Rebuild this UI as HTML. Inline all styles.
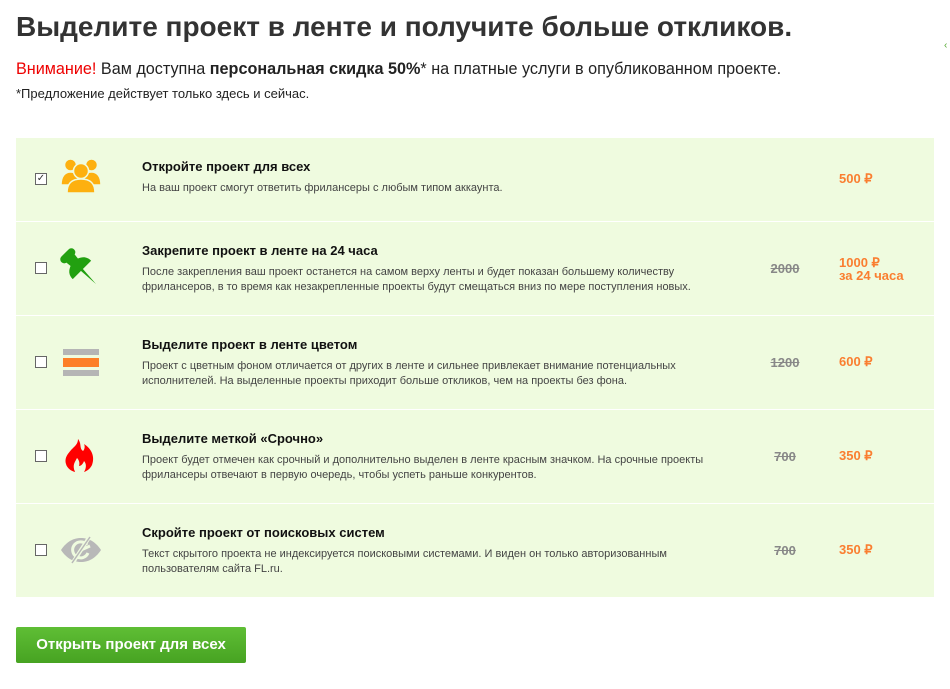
<!DOCTYPE html>
<html><head><meta charset="utf-8"><style>
body{margin:0;width:950px;height:689px;background:#fff;font-family:"Liberation Sans",Arial,sans-serif;position:relative;overflow:hidden}
h1{position:absolute;left:16px;top:11px;margin:0;font-size:28px;font-weight:bold;color:#333;letter-spacing:0}
.n{position:absolute;left:16px;top:60px;font-size:16.2px;color:#222}
.n b{font-weight:bold}
.s{position:absolute;left:16px;top:86px;font-size:13px;color:#222}
.panel{position:absolute;left:16px;top:138px;width:918px;height:459px;background:#effbdf}
.row{position:absolute;left:0;width:918px;border-top:1px solid #fff}
.cb{position:absolute;left:19px;width:12px;height:12px;border:1px solid #666;background:#fff;box-sizing:border-box}
.ic{position:absolute;left:44px}
.t{position:absolute;left:126px;font-size:13px;font-weight:bold;color:#111}
.d{position:absolute;left:126px;font-size:11px;line-height:15px;color:#444;width:580px}
.op{position:absolute;left:751px;font-size:13px;font-weight:bold;color:#888;text-decoration:line-through;width:36px;text-align:center}
.p{position:absolute;left:823px;font-size:13px;font-weight:bold;color:#fa7e30;line-height:13px}
.btn{position:absolute;left:16px;top:627px;width:230px;height:36px;border-radius:2px;background:linear-gradient(#5fbe35,#47a322);color:#fff;font-weight:bold;font-size:15px;line-height:36px;text-align:center}
</style></head><body>
<h1>Выделите проект в ленте и получите больше откликов.</h1>
<div style="position:absolute;left:944px;top:40px;color:#5a3;font-size:10px">‹</div>
<div class="n"><span style="color:#e00">Внимание!</span> Вам доступна <b>персональная скидка 50%</b>* на платные услуги в опубликованном проекте.</div>
<div class="s">*Предложение действует только здесь и сейчас.</div>
<div class="panel">
 <div class="row" style="top:-1px;height:84px;border-top:none">
  <div class="cb" style="top:36px;font-size:10px;line-height:10px;text-align:center;color:#333">✓</div>
  <svg class="ic" style="top:22px;left:45px" width="42" height="36" viewBox="0 0 42 36"><g fill="#fdb010" stroke="#effbdf" stroke-width="1.5"><circle cx="9.5" cy="6" r="6"/><circle cx="30.5" cy="6" r="6"/><path d="M0 26c0-9 4-13 9.5-13s9.5 4 9.5 13z"/><path d="M21 26c0-9 4-13 9.5-13S40 17 40 26z"/><circle cx="20" cy="12" r="7.5"/><path d="M6 34c0-10 5-14 14-14s14 4 14 14z"/></g></svg>
  <div class="t" style="top:22px">Откройте проект для всех</div>
  <div class="d" style="top:44px">На ваш проект смогут ответить фрилансеры с любым типом аккаунта.</div>
  <div class="p" style="top:35px">500 ₽</div>
 </div>
 <div class="row" style="top:83px;height:93px">
  <div class="cb" style="top:40px"></div>
  <svg class="ic" style="top:26px" width="42" height="42" viewBox="0 0 42 42"><g fill="#22a010" transform="rotate(-45 17 17)"><rect x="8" y="0" width="18" height="8" rx="4"/><path d="M11 6h12l-1 9H12z"/><path d="M12 13h10c5 2 8 5 8 11H4c0-6 3-9 8-11z"/><path d="M15.5 22h3l-1.5 22z"/></g></svg>
  <div class="t" style="top:21px">Закрепите проект в ленте на 24 часа</div>
  <div class="d" style="top:43px">После закрепления ваш проект останется на самом верху ленты и будет показан большему количеству<br>фрилансеров, в то время как незакрепленные проекты будут смещаться вниз по мере поступления новых.</div>
  <div class="op" style="top:39px">2000</div>
  <div class="p" style="top:34px">1000 ₽<br>за 24 часа</div>
 </div>
 <div class="row" style="top:177px;height:93px">
  <div class="cb" style="top:40px"></div>
  <div class="ic" style="top:33px;left:47px;width:36px;height:6px;background:#b5b5b5"></div>
  <div class="ic" style="top:42px;left:47px;width:36px;height:9px;background:#fd7f28"></div>
  <div class="ic" style="top:54px;left:47px;width:36px;height:6px;background:#b5b5b5"></div>
  <div class="t" style="top:21px">Выделите проект в ленте цветом</div>
  <div class="d" style="top:43px">Проект с цветным фоном отличается от других в ленте и сильнее привлекает внимание потенциальных<br>исполнителей. На выделенные проекты приходит больше откликов, чем на проекты без фона.</div>
  <div class="op" style="top:39px">1200</div>
  <div class="p" style="top:39px">600 ₽</div>
 </div>
 <div class="row" style="top:271px;height:93px">
  <div class="cb" style="top:40px"></div>
  <svg class="ic" style="top:29px;left:48px" width="31" height="33" viewBox="0 0 31 33"><path fill="#f00" d="M14 0c4 5 1 9 5 12 2-2 2-5 1-7 8 5 11 13 8 21-2 4-5 6-8 7 2-3 3-8 0-11-1 3-3 5-5 5 1-3 0-6-2-8-2 4-4 6-3 11 0 1 1 2 1 3-4-1-8-4-9-8-2-7 3-11 5-14 4-4 7-6 7-11z"/></svg>
  <div class="t" style="top:21px">Выделите меткой «Срочно»</div>
  <div class="d" style="top:43px">Проект будет отмечен как срочный и дополнительно выделен в ленте красным значком. На срочные проекты<br>фрилансеры отвечают в первую очередь, чтобы успеть раньше конкурентов.</div>
  <div class="op" style="top:39px">700</div>
  <div class="p" style="top:39px">350 ₽</div>
 </div>
 <div class="row" style="top:365px;height:94px">
  <div class="cb" style="top:40px"></div>
  <svg class="ic" style="top:32px;left:45px" width="40" height="28" viewBox="0 0 40 28"><path fill="#b8b8b8" d="M0 14C6 5 13 2 20 2s14 3 20 12c-6 9-13 12-20 12S6 23 0 14z"/><path d="M26 9a8 8 0 1 0 1 8" fill="none" stroke="#effbdf" stroke-width="3"/><path d="M20 14l9-4" stroke="#effbdf" stroke-width="3"/><path d="M29 0L11 28" stroke="#effbdf" stroke-width="4"/><path d="M29 1L11 27" stroke="#b8b8b8" stroke-width="1.5"/></svg>
  <div class="t" style="top:21px">Скройте проект от поисковых систем</div>
  <div class="d" style="top:43px">Текст скрытого проекта не индексируется поисковыми системами. И виден он только авторизованным<br>пользователям сайта FL.ru.</div>
  <div class="op" style="top:39px">700</div>
  <div class="p" style="top:39px">350 ₽</div>
 </div>
</div>
<div class="btn">Открыть проект для всех</div>
</body></html>
